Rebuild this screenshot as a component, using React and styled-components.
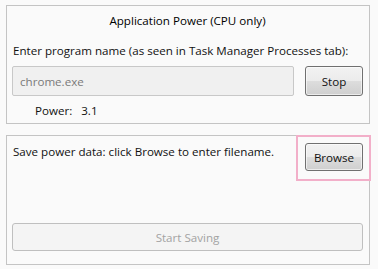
import React from 'react';
import styled, { createGlobalStyle } from 'styled-components';

const GlobalStyle = createGlobalStyle`
  html, body {
    margin: 0;
    padding: 0;
    background: #fafafa;
  }
  body {
    font-family: 'Open Sans', 'Liberation Sans', sans-serif;
    font-size: 11.6px;
    color: #111;
  }
`;

const Page = styled.div`
  width: 378px;
  height: 269px;
  padding: 5px 8px 0 6px;
  box-sizing: border-box;
  display: flex;
  flex-direction: column;
  gap: 11px;
`;

const Panel = styled.div`
  border: 1px solid #c4c4c4;
  height: ${props => props.h}px;
  box-sizing: border-box;
  padding: 0 6px 0 5px;
  display: flex;
  flex-direction: column;
  position: relative;
`;

const Title = styled.div`
  text-align: center;
  margin-top: 6px;
  height: 17px;
  line-height: 17px;
  color: #000;
`;

const Label = styled.div`
  height: 17px;
  line-height: 17px;
  margin-top: ${props => props.mt || 0}px;
  padding-left: ${props => props.indent || 0}px;
  white-space: nowrap;
`;

const Row = styled.div`
  display: flex;
  align-items: flex-start;
  justify-content: space-between;
  gap: 11px;
  margin-top: ${props => props.mt || 0}px;
`;

const TextBox = styled.div`
  flex: 1;
  height: 30px;
  box-sizing: border-box;
  border: 1px solid #c8c8c8;
  border-radius: 2px;
  background: #f0f0f0;
  color: #7a7a7a;
  padding-left: 7px;
  display: flex;
  align-items: center;
`;

const Button = styled.button`
  font-family: inherit;
  font-size: 11.6px;
  width: ${props => props.w ? `${props.w}px` : '100%'};
  height: ${props => props.h || 28}px;
  box-sizing: border-box;
  border-radius: 3px;
  border: 1px solid ${props => props.disabled ? '#bfbfbf' : '#707070'};
  color: ${props => props.disabled ? '#a3a3a3' : '#111'};
  background: ${props => props.disabled
    ? '#f4f4f4'
    : 'linear-gradient(to bottom, #f2f2f2 0%, #ebebeb 50%, #dddddd 51%, #cfcfcf 100%)'};
  box-shadow: ${props => props.disabled ? 'none' : 'inset 0 0 0 1px rgba(255,255,255,0.6)'};
  padding: 0;
  flex-shrink: 0;
`;

const Power = styled.div`
  display: flex;
  gap: 9px;
  margin-top: 6px;
  padding-left: 23px;
  height: 17px;
  line-height: 17px;
`;

const Highlight = styled.div`
  position: absolute;
  right: -2px;
  top: -1px;
  width: 75px;
  height: 46px;
  box-sizing: border-box;
  border: 2px solid #f2afc9;
  pointer-events: none;
`;

const Spacer = styled.div`
  flex: 1;
`;

const BottomGap = styled.div`
  height: 13px;
`;

export default function App() {
  return (
    <>
      <GlobalStyle />
      <Page>
        <Panel h={119}>
          <Title>Application Power (CPU only)</Title>
          <Label mt={13} indent={1}>Enter program name (as seen in Task Manager Processes tab):</Label>
          <Row mt={7}>
            <TextBox>chrome.exe</TextBox>
            <Button w={58} h={30}>Stop</Button>
          </Row>
          <Power>
            <span>Power:</span>
            <span>3.1</span>
          </Power>
        </Panel>
        <Panel h={130}>
          <Row mt={7}>
            <Label mt={0} indent={1}>Save power data: click Browse to enter filename.</Label>
            <Button w={58} h={28}>Browse</Button>
          </Row>
          <Spacer />
          <Button h={28} disabled>Start Saving</Button>
          <BottomGap />
          <Highlight />
        </Panel>
      </Page>
    </>
  );
}
